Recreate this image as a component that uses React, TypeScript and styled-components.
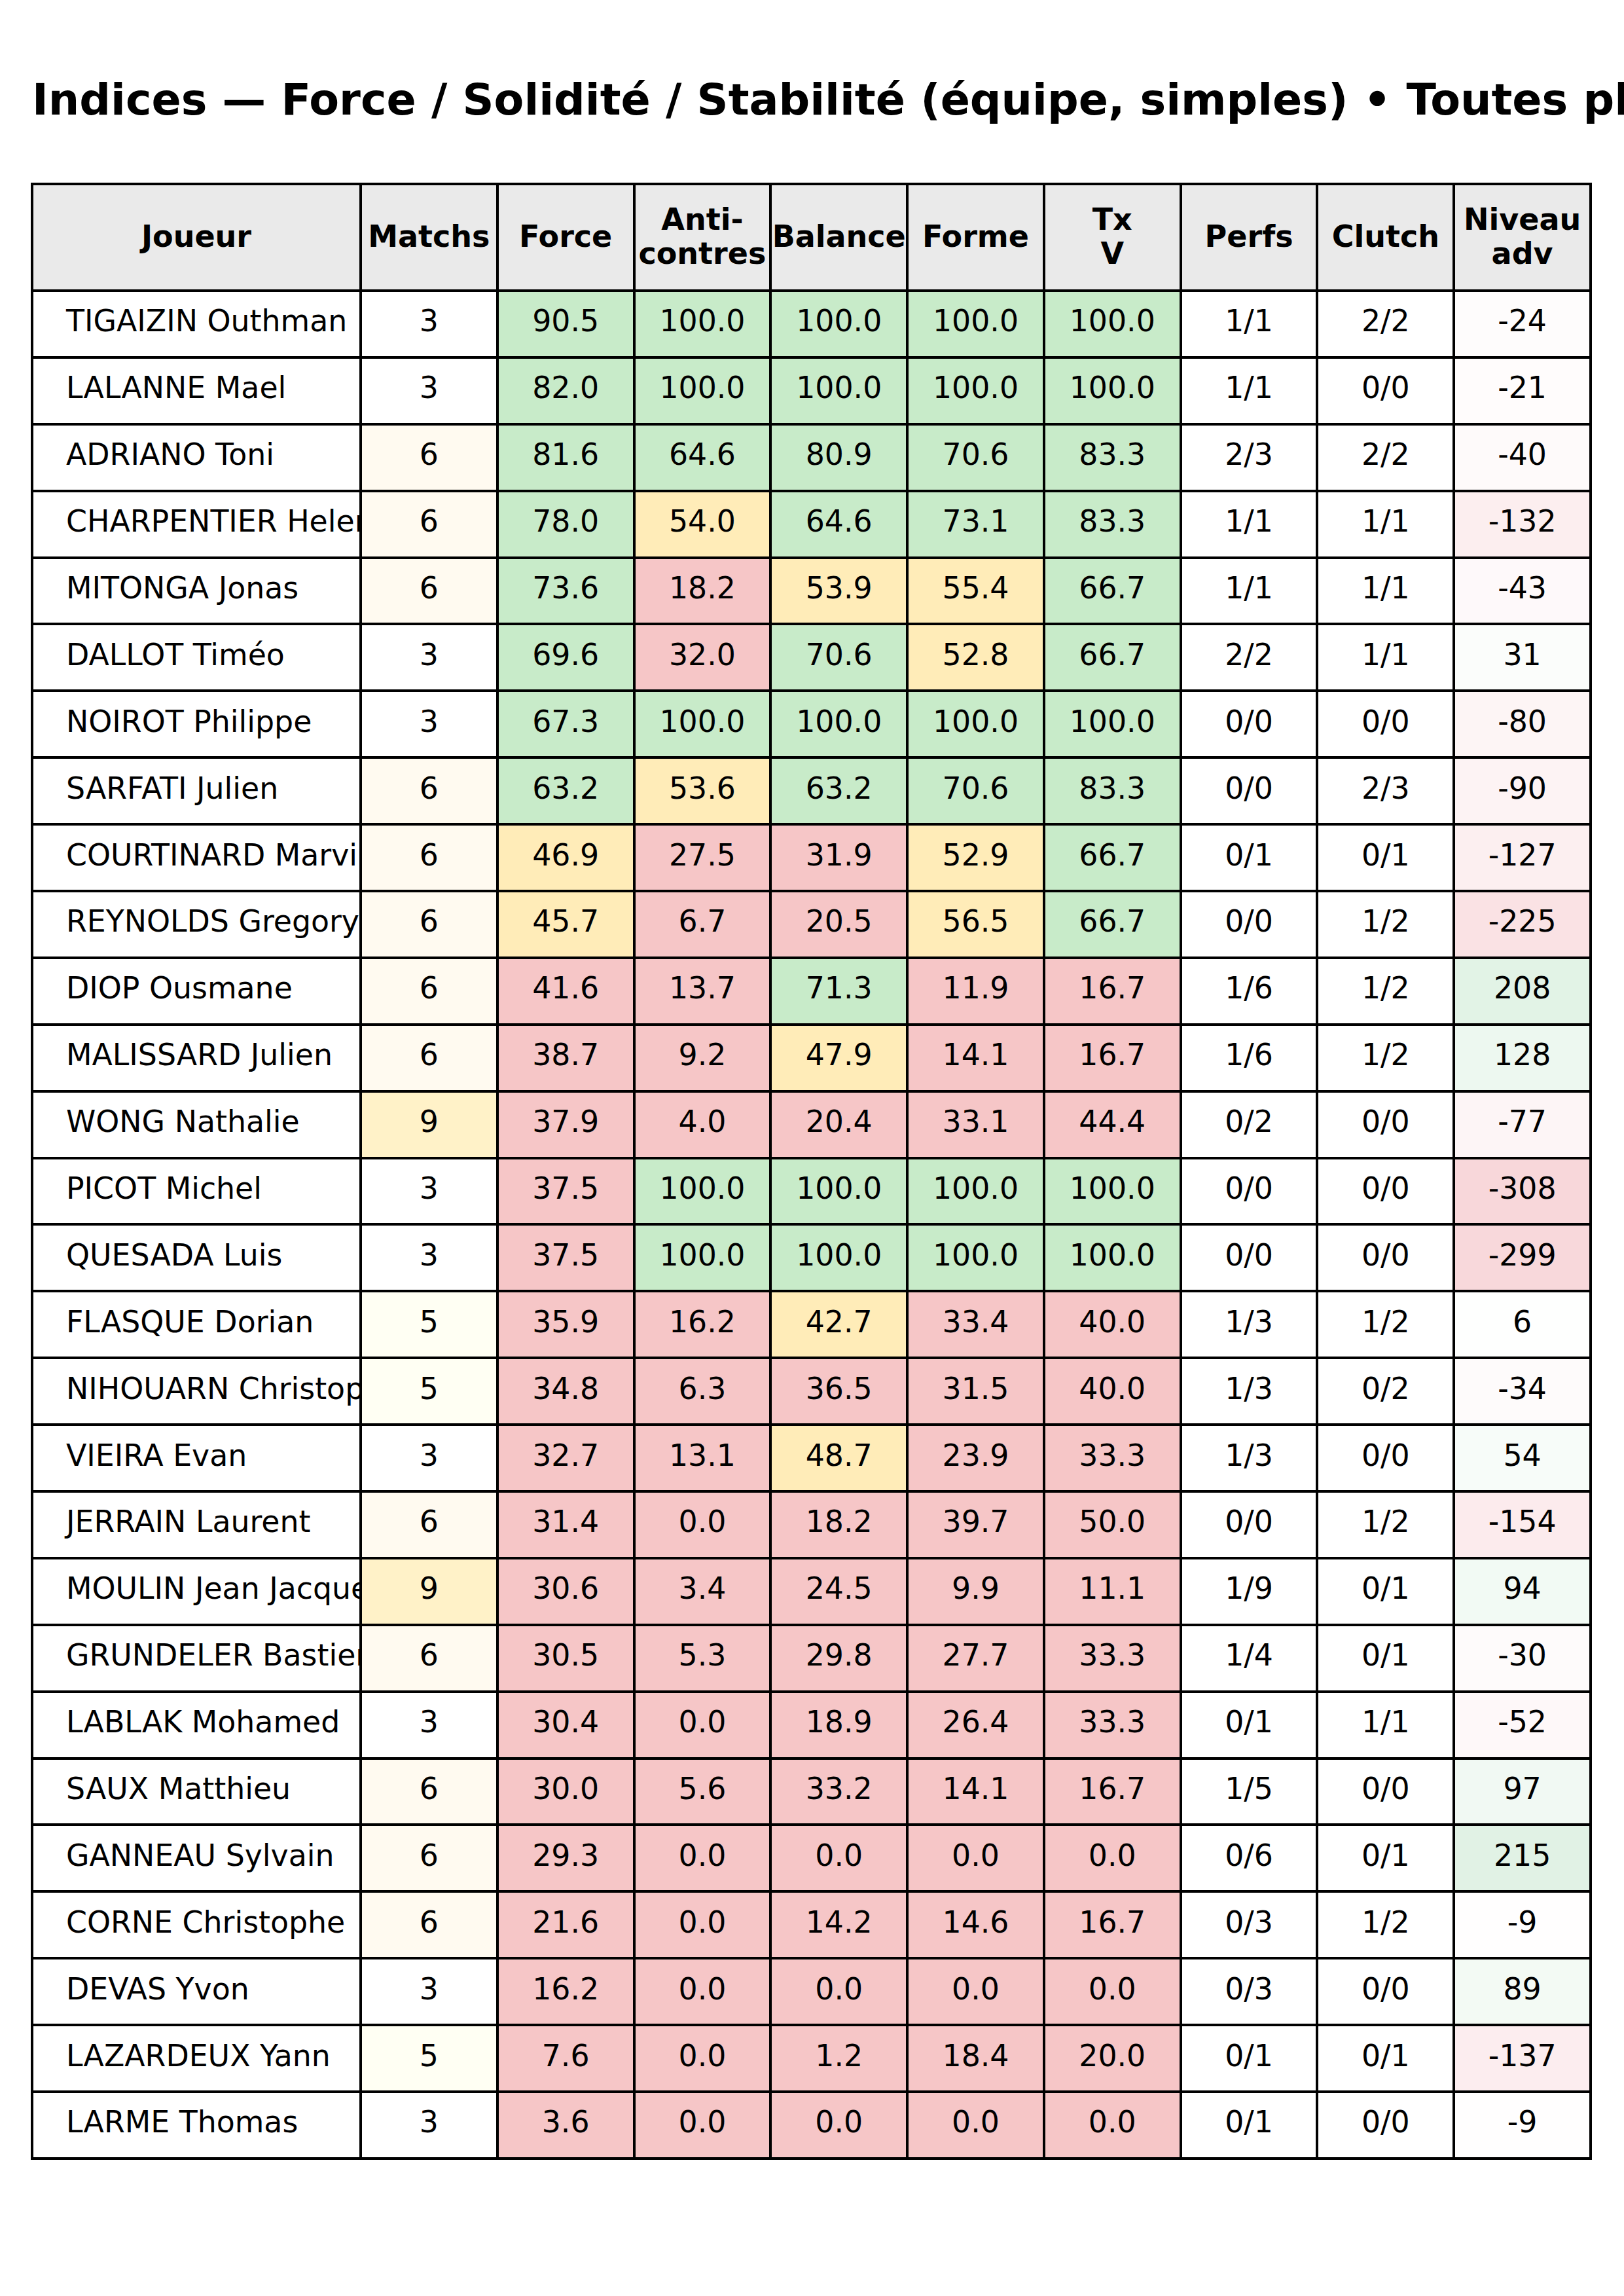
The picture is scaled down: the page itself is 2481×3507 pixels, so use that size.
import React from "react";
import styled, { createGlobalStyle } from "styled-components";

const GlobalStyle = createGlobalStyle`
  html, body {
    margin: 0;
    padding: 0;
    background: #ffffff;
    overflow: hidden;
  }
  body {
    font-family: "DejaVu Sans", "Liberation Sans", sans-serif;
    color: #000000;
  }
`;

const COLS = "498px repeat(9, 1fr)";

const Page = styled.div`
  width: 2481px;
  height: 3507px;
  box-sizing: border-box;
  padding-top: 119px;
  overflow: hidden;
`;

const Title = styled.h1`
  margin: 0 0 93px 49px;
  font-size: 66.7px;
  line-height: 67px;
  font-weight: 700;
  white-space: nowrap;
`;

const Table = styled.div`
  width: 2385px;
  margin-left: 47px;
  box-sizing: border-box;
  padding: 4px;
  background: #000000;
  display: flex;
  flex-direction: column;
  gap: 4px;
`;

const HeaderRow = styled.div`
  display: grid;
  grid-template-columns: ${COLS};
  gap: 4px;
  height: 159px;
`;

const Row = styled.div`
  display: grid;
  grid-template-columns: ${COLS};
  gap: 4px;
  height: 97.9px;
`;

const HeaderCell = styled.div`
  background: #eaeaea;
  font-weight: 700;
  font-size: 46px;
  line-height: 52px;
  text-align: center;
  display: flex;
  align-items: center;
  justify-content: center;
  padding-bottom: 4px;
  box-sizing: border-box;
  white-space: nowrap;
`;

const Cell = styled.div<{ $bg?: string }>`
  background: ${(p) => p.$bg ?? "#ffffff"};
  font-size: 45.8px;
  display: flex;
  align-items: center;
  justify-content: center;
  padding-bottom: 9px;
  box-sizing: border-box;
  white-space: nowrap;
  overflow: hidden;
`;

const NameCell = styled(Cell)`
  justify-content: flex-start;
  padding-left: 50px;
`;

type Tone = "g" | "y" | "r";
const TONES: Record<Tone, string> = {
  g: "#c8ebc9",
  y: "#ffecb8",
  r: "#f6c6c7",
};

const MATCH_BG: Record<number, string> = {
  3: "#ffffff",
  5: "#fffff3",
  6: "#fffaf0",
  9: "#fff2c8",
};

function blend(hex: string, t: number): string {
  const r = parseInt(hex.slice(1, 3), 16);
  const g = parseInt(hex.slice(3, 5), 16);
  const b = parseInt(hex.slice(5, 7), 16);
  const mix = (c: number) => Math.round(255 - (255 - c) * t);
  return `rgb(${mix(r)}, ${mix(g)}, ${mix(b)})`;
}

function levelBg(v: number): string {
  const t = Math.min(1, Math.abs(v) / 308);
  return v < 0 ? blend("#f8d7da", t) : blend("#d4edda", t);
}

type Player = [string, number, [string, Tone][], string, string, number];

const v = (s: string, t: Tone): [string, Tone] => [s, t];

const DATA: Player[] = [
  ["TIGAIZIN Outhman", 3, [v("90.5", "g"), v("100.0", "g"), v("100.0", "g"), v("100.0", "g"), v("100.0", "g")], "1/1", "2/2", -24],
  ["LALANNE Mael", 3, [v("82.0", "g"), v("100.0", "g"), v("100.0", "g"), v("100.0", "g"), v("100.0", "g")], "1/1", "0/0", -21],
  ["ADRIANO Toni", 6, [v("81.6", "g"), v("64.6", "g"), v("80.9", "g"), v("70.6", "g"), v("83.3", "g")], "2/3", "2/2", -40],
  ["CHARPENTIER Helene", 6, [v("78.0", "g"), v("54.0", "y"), v("64.6", "g"), v("73.1", "g"), v("83.3", "g")], "1/1", "1/1", -132],
  ["MITONGA Jonas", 6, [v("73.6", "g"), v("18.2", "r"), v("53.9", "y"), v("55.4", "y"), v("66.7", "g")], "1/1", "1/1", -43],
  ["DALLOT Timéo", 3, [v("69.6", "g"), v("32.0", "r"), v("70.6", "g"), v("52.8", "y"), v("66.7", "g")], "2/2", "1/1", 31],
  ["NOIROT Philippe", 3, [v("67.3", "g"), v("100.0", "g"), v("100.0", "g"), v("100.0", "g"), v("100.0", "g")], "0/0", "0/0", -80],
  ["SARFATI Julien", 6, [v("63.2", "g"), v("53.6", "y"), v("63.2", "g"), v("70.6", "g"), v("83.3", "g")], "0/0", "2/3", -90],
  ["COURTINARD Marvin", 6, [v("46.9", "y"), v("27.5", "r"), v("31.9", "r"), v("52.9", "y"), v("66.7", "g")], "0/1", "0/1", -127],
  ["REYNOLDS Gregory", 6, [v("45.7", "y"), v("6.7", "r"), v("20.5", "r"), v("56.5", "y"), v("66.7", "g")], "0/0", "1/2", -225],
  ["DIOP Ousmane", 6, [v("41.6", "r"), v("13.7", "r"), v("71.3", "g"), v("11.9", "r"), v("16.7", "r")], "1/6", "1/2", 208],
  ["MALISSARD Julien", 6, [v("38.7", "r"), v("9.2", "r"), v("47.9", "y"), v("14.1", "r"), v("16.7", "r")], "1/6", "1/2", 128],
  ["WONG Nathalie", 9, [v("37.9", "r"), v("4.0", "r"), v("20.4", "r"), v("33.1", "r"), v("44.4", "r")], "0/2", "0/0", -77],
  ["PICOT Michel", 3, [v("37.5", "r"), v("100.0", "g"), v("100.0", "g"), v("100.0", "g"), v("100.0", "g")], "0/0", "0/0", -308],
  ["QUESADA Luis", 3, [v("37.5", "r"), v("100.0", "g"), v("100.0", "g"), v("100.0", "g"), v("100.0", "g")], "0/0", "0/0", -299],
  ["FLASQUE Dorian", 5, [v("35.9", "r"), v("16.2", "r"), v("42.7", "y"), v("33.4", "r"), v("40.0", "r")], "1/3", "1/2", 6],
  ["NIHOUARN Christophe", 5, [v("34.8", "r"), v("6.3", "r"), v("36.5", "r"), v("31.5", "r"), v("40.0", "r")], "1/3", "0/2", -34],
  ["VIEIRA Evan", 3, [v("32.7", "r"), v("13.1", "r"), v("48.7", "y"), v("23.9", "r"), v("33.3", "r")], "1/3", "0/0", 54],
  ["JERRAIN Laurent", 6, [v("31.4", "r"), v("0.0", "r"), v("18.2", "r"), v("39.7", "r"), v("50.0", "r")], "0/0", "1/2", -154],
  ["MOULIN Jean Jacques", 9, [v("30.6", "r"), v("3.4", "r"), v("24.5", "r"), v("9.9", "r"), v("11.1", "r")], "1/9", "0/1", 94],
  ["GRUNDELER Bastien", 6, [v("30.5", "r"), v("5.3", "r"), v("29.8", "r"), v("27.7", "r"), v("33.3", "r")], "1/4", "0/1", -30],
  ["LABLAK Mohamed", 3, [v("30.4", "r"), v("0.0", "r"), v("18.9", "r"), v("26.4", "r"), v("33.3", "r")], "0/1", "1/1", -52],
  ["SAUX Matthieu", 6, [v("30.0", "r"), v("5.6", "r"), v("33.2", "r"), v("14.1", "r"), v("16.7", "r")], "1/5", "0/0", 97],
  ["GANNEAU Sylvain", 6, [v("29.3", "r"), v("0.0", "r"), v("0.0", "r"), v("0.0", "r"), v("0.0", "r")], "0/6", "0/1", 215],
  ["CORNE Christophe", 6, [v("21.6", "r"), v("0.0", "r"), v("14.2", "r"), v("14.6", "r"), v("16.7", "r")], "0/3", "1/2", -9],
  ["DEVAS Yvon", 3, [v("16.2", "r"), v("0.0", "r"), v("0.0", "r"), v("0.0", "r"), v("0.0", "r")], "0/3", "0/0", 89],
  ["LAZARDEUX Yann", 5, [v("7.6", "r"), v("0.0", "r"), v("1.2", "r"), v("18.4", "r"), v("20.0", "r")], "0/1", "0/1", -137],
  ["LARME Thomas", 3, [v("3.6", "r"), v("0.0", "r"), v("0.0", "r"), v("0.0", "r"), v("0.0", "r")], "0/1", "0/0", -9],
];

const HEADERS: string[][] = [
  ["Joueur"],
  ["Matchs"],
  ["Force"],
  ["Anti-", "contres"],
  ["Balance"],
  ["Forme"],
  ["Tx", "V"],
  ["Perfs"],
  ["Clutch"],
  ["Niveau", "adv"],
];

export default function App() {
  return (
    <>
      <GlobalStyle />
      <Page>
        <Title>Indices — Force / Solidité / Stabilité (équipe, simples) • Toutes phases</Title>
        <Table>
          <HeaderRow>
            {HEADERS.map((lines, i) => (
              <HeaderCell key={i}>
                <div>
                  {lines.map((l, j) => (
                    <div key={j}>{l}</div>
                  ))}
                </div>
              </HeaderCell>
            ))}
          </HeaderRow>
          {DATA.map(([name, matchs, vals, perfs, clutch, niveau]) => (
            <Row key={name}>
              <NameCell>{name}</NameCell>
              <Cell $bg={MATCH_BG[matchs]}>{matchs}</Cell>
              {vals.map(([txt, tone], k) => (
                <Cell key={k} $bg={TONES[tone]}>
                  {txt}
                </Cell>
              ))}
              <Cell>{perfs}</Cell>
              <Cell>{clutch}</Cell>
              <Cell $bg={levelBg(niveau)}>{niveau}</Cell>
            </Row>
          ))}
        </Table>
      </Page>
    </>
  );
}
